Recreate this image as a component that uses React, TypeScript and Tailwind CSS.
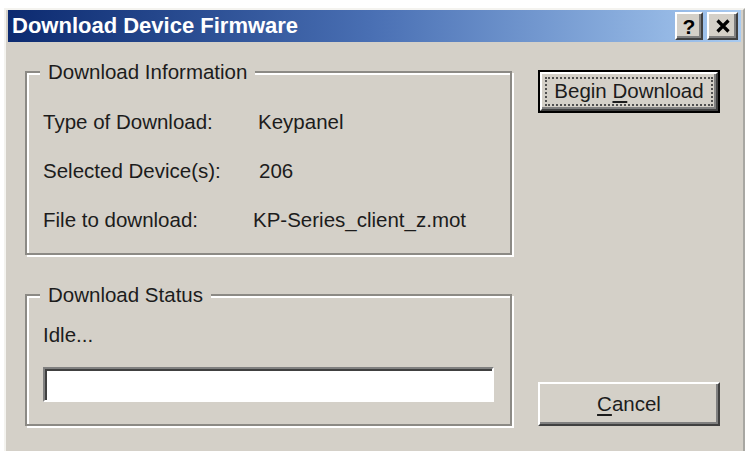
import React from "react";

const FONT = "font-['Liberation_Sans',Arial,sans-serif]";

type InfoRow = {
    label: string;
    value: string;
    valueClass?: string;
};

const INFO_ROWS: InfoRow[] = [
    { label: "Type of Download:", value: "Keypanel" },
    { label: "Selected Device(s):", value: "206", valueClass: "ml-[1px]" },
    { label: "File to download:", value: "KP-Series_client_z.mot", valueClass: "-ml-[5px]" },
];

function TitleButton({ children, className }: React.PropsWithChildren<{ className?: string }>) {
    return (
        <button
            className={
                "flex h-[28px] items-center justify-center border-2 border-t-white border-l-white border-r-[#404040] border-b-[#404040] bg-[#d4d0c8] shadow-[inset_-2px_-2px_0_#808080] " +
                (className ?? "")
            }
        >
            {children}
        </button>
    );
}

function TitleBar() {
    return (
        <div className="flex h-[33px] items-center bg-linear-to-r from-[#0c2a70] via-[#4a70b4] to-[#a8caf0] pl-[4px] pr-[3px]">
            <span className="flex-1 text-[22px] font-bold leading-none text-white">Download Device Firmware</span>
            <TitleButton className="w-[28px]">
                <span className="text-[21px] font-bold leading-none text-black">?</span>
            </TitleButton>
            <TitleButton className="ml-[4px] w-[31px]">
                <svg width="16" height="14" viewBox="0 0 16 14">
                    <path d="M2.5 1.5 L13.5 12.5 M13.5 1.5 L2.5 12.5" stroke="#000" strokeWidth="3.2" />
                </svg>
            </TitleButton>
        </div>
    );
}

function GroupBox({ legend, className, children }: React.PropsWithChildren<{ legend: string; className?: string }>) {
    return (
        <fieldset
            className={
                "border-2 border-[#8c8a85] px-[16px] shadow-[inset_2px_2px_0_#ffffff,2px_2px_0_#ffffff] " + (className ?? "")
            }
        >
            <legend className="-ml-[3px] bg-[#d4d0c8] px-[8px] text-[20.5px] leading-[22px]">{legend}</legend>
            {children}
        </fieldset>
    );
}

function ClassicButton({ children, isDefault }: React.PropsWithChildren<{ isDefault?: boolean }>) {
    if (isDefault) {
        return (
            <button className="h-[43px] w-[182px] border-2 border-black bg-[#d4d0c8]">
                <div className="h-full border-2 border-t-white border-l-white border-r-[#404040] border-b-[#404040] p-[3px] shadow-[inset_-2px_-2px_0_#808080]">
                    <div className="flex h-full items-center justify-center border-2 border-dotted border-[#505050] text-[20.5px] leading-none">
                        {children}
                    </div>
                </div>
            </button>
        );
    }
    return (
        <button className="flex h-[44px] w-[182px] items-center justify-center border-2 border-t-white border-l-white border-r-[#404040] border-b-[#404040] bg-[#d4d0c8] text-[20.5px] leading-none shadow-[inset_-2px_-2px_0_#808080]">
            {children}
        </button>
    );
}

export default function App() {
    return (
        <div className={`h-[451px] w-[748px] bg-white pt-[8px] pl-[4px] pr-[3px] text-[#1c1c1c] ${FONT}`}>
            <div className="flex h-full flex-col border-l-2 border-t-2 border-[#f4f3ef] border-r-2 border-r-[#a8a7a2] bg-[#d4d0c8] px-[2px]">
                <TitleBar />

                <div className="flex flex-1 pl-[17px] pb-[25px]">
                    <div className="w-[487px]">
                        <GroupBox legend="Download Information" className="mt-[19px] pt-[27px] pb-[21px]">
                            <div className="flex flex-col gap-[25px]">
                                {INFO_ROWS.map((row) => (
                                    <div key={row.label} className="flex text-[20.5px] leading-[24px]">
                                        <span className="w-[215px] shrink-0">{row.label}</span>
                                        <span className={row.valueClass}>{row.value}</span>
                                    </div>
                                ))}
                            </div>
                        </GroupBox>

                        <GroupBox legend="Download Status" className="mt-[29px] pt-[17px] pb-[22px]">
                            <div className="text-[20.5px] leading-[24px]">Idle...</div>
                            <div className="mt-[20px] h-[35px] w-[451px] border-2 border-t-[#808080] border-l-[#808080] border-r-white border-b-white bg-white shadow-[inset_2px_2px_0_#404040]" />
                        </GroupBox>
                    </div>

                    <div className="ml-[26px] flex w-[182px] flex-col pt-[28px]">
                        <ClassicButton isDefault>
                            Begin&nbsp;<span className="underline underline-offset-[3px]">D</span>ownload
                        </ClassicButton>
                        <div className="mt-auto">
                            <ClassicButton>
                                <span className="underline underline-offset-[3px]">C</span>ancel
                            </ClassicButton>
                        </div>
                    </div>
                </div>
            </div>
        </div>
    );
}
